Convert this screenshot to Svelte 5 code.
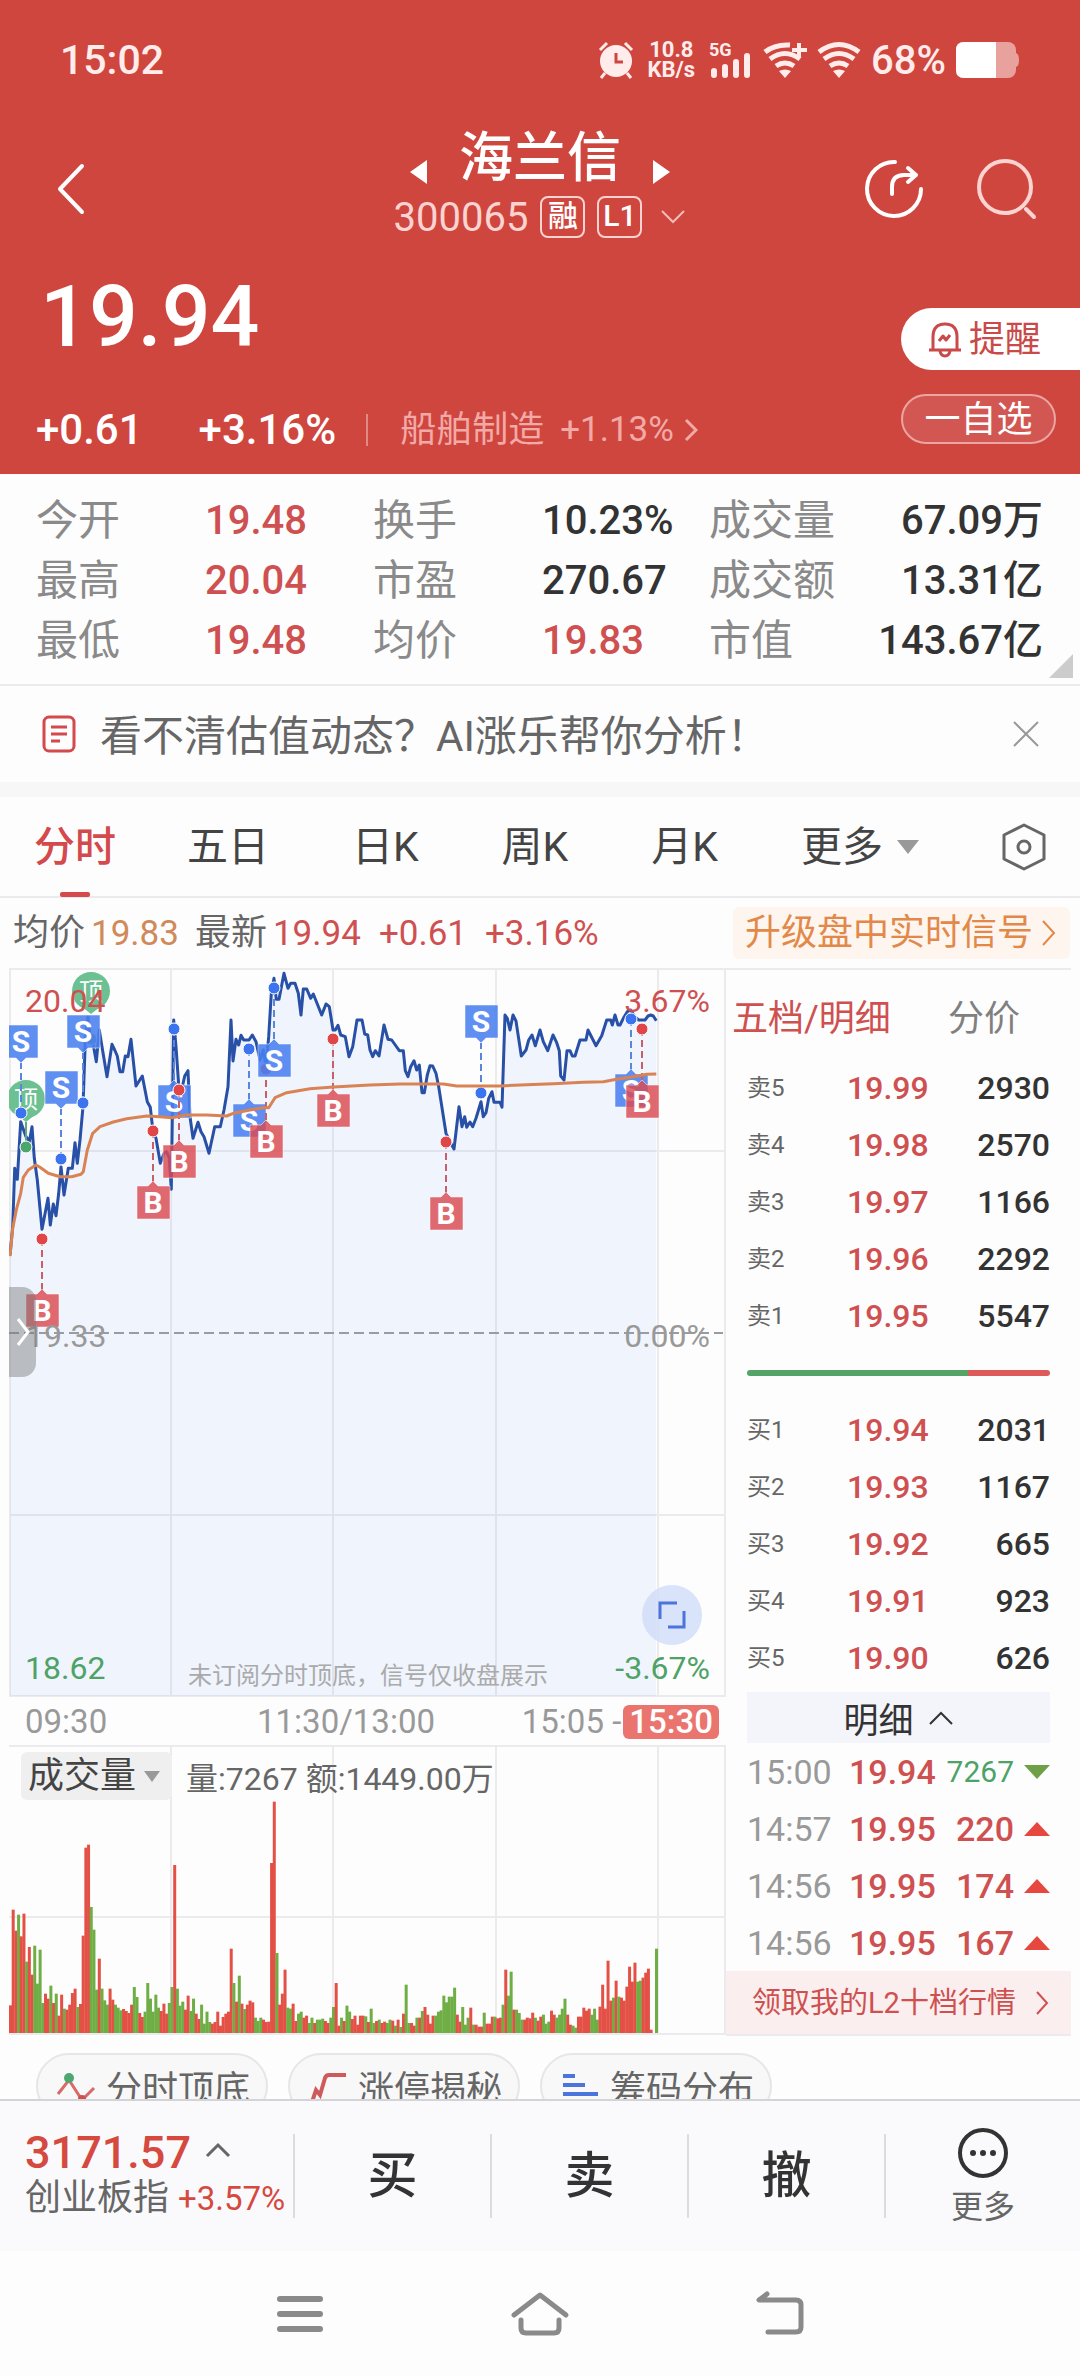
<script>
  const stats = [
    ['今开', '19.48', 'up'], ['换手', '10.23%', ''], ['成交量', '67.09万', ''],
    ['最高', '20.04', 'up'], ['市盈', '270.67', ''], ['成交额', '13.31亿', ''],
    ['最低', '19.48', 'up'], ['均价', '19.83', 'up'], ['市值', '143.67亿', ''],
  ];

  const periods = ['分时', '五日', '日K', '周K', '月K'];
  let period = $state('分时');

  const asks = [
    ['卖5', '19.99', 2930], ['卖4', '19.98', 2570], ['卖3', '19.97', 1166],
    ['卖2', '19.96', 2292], ['卖1', '19.95', 5547],
  ];
  const bids = [
    ['买1', '19.94', 2031], ['买2', '19.93', 1167], ['买3', '19.92', 665],
    ['买4', '19.91', 923], ['买5', '19.90', 626],
  ];
  const ticks = [
    ['15:00', '19.94', 7267, 'down'],
    ['14:57', '19.95', 220, 'up'],
    ['14:56', '19.95', 174, 'up'],
    ['14:56', '19.95', 167, 'up'],
  ];

  // chart samples are stored in thirds of a unit
  const price = [
    30,915, 38,830, 44,655, 52,688, 62,515, 78,560, 88,575, 96,530, 103,625, 112,690, 126,838, 144,745,
    151,825, 160,762, 168,797, 176,730, 183,650, 192,735, 205,655, 217,655, 225,578, 232,640, 240,570,
    249,470, 256,270, 264,200, 272,270, 280,285, 289,335, 298,240, 306,290, 321,380, 336,283, 344,300,
    352,318, 360,365, 368,365, 376,318, 384,320, 393,268, 408,408, 427,378, 442,455, 451,472, 459,543,
    468,565, 481,640, 492,610, 500,605, 508,625, 514,718, 521,210, 528,290, 537,418, 546,415, 554,378,
    564,362, 570,500, 579,565, 594,517, 603,545, 612,560, 627,610, 644,530, 661,530, 672,480, 684,410,
    693,210, 699,333, 708,268, 716,285, 723,256, 731,270, 747,270, 757,255, 768,275, 780,330, 790,300,
    798,350, 806,260, 814,130, 822,85, 829,148, 837,148, 852,70, 864,115, 872,100, 885,100, 895,130,
    903,195, 910,117, 920,117, 932,145, 940,132, 965,195, 978,162, 988,170, 999,240, 1006,240, 1014,226,
    1022,255, 1036,260, 1047,320, 1058,290, 1071,210, 1086,210, 1094,252, 1103,255, 1110,300, 1118,320,
    1126,302, 1137,318, 1152,225, 1164,268, 1175,270, 1188,288, 1198,302, 1210,302, 1216,362, 1224,380,
    1232,350, 1242,332, 1250,360, 1258,345, 1266,428, 1273,428, 1282,375, 1290,347, 1298,348, 1308,370,
    1316,410, 1338,550, 1350,575, 1362,597, 1377,470, 1386,530, 1394,500, 1400,532, 1410,516, 1418,530,
    1428,505, 1443,455, 1450,500, 1458,488, 1466,445, 1476,425, 1482,457, 1500,457, 1506,472, 1515,195,
    1522,205, 1530,240, 1539,195, 1548,213, 1564,318, 1578,300, 1586,270, 1596,255, 1606,287, 1620,240,
    1630,275, 1643,302, 1659,255, 1670,278, 1678,302, 1682,378, 1692,390, 1701,302, 1710,302, 1717,318,
    1725,318, 1740,270, 1758,270, 1764,240, 1788,287, 1805,257, 1820,210, 1832,210, 1837,225, 1845,195,
    1854,225, 1860,225, 1870,205, 1882,185, 1892,180, 1904,200, 1916,210, 1935,210, 1944,198, 1952,195,
    1960,198, 1969,212,
  ];
  const average = [
    30,918, 38,835, 50,775, 62,730, 70,682, 85,660, 108,645, 120,652, 145,670, 180,680, 215,680, 243,673,
    250,665, 262,600, 278,550, 300,530, 340,516, 380,506, 440,498, 480,500, 515,503, 560,495, 620,495,
    680,498, 700,490, 750,480, 790,473, 806,473, 825,443, 860,428, 930,416, 1000,411, 1110,405, 1200,402,
    1330,402, 1370,408, 1500,408, 1580,404, 1660,401, 1750,397, 1810,395, 1850,388, 1900,380, 1940,373,
    1969,372,
  ];
  // one bar a minute, negative = seller driven
  const volume = [
    83,370,307,-355,290,358,-214,258,175,-262,-148,-250,-90,118,103,-142,90,-118,52,115,-73,70,85,120,
    133,-78,87,292,556,565,-378,-310,-130,223,-133,-98,-85,133,100,-85,-76,-68,72,66,60,85,-138,-108,
    60,48,-64,-150,-103,-64,-115,-76,66,88,58,-90,-138,504,-133,-82,-94,70,112,-66,-103,58,42,-85,
    -28,-64,-33,28,33,64,22,48,58,64,253,-150,94,-172,88,-72,85,97,92,-46,-36,-46,40,33,34,510,694,
    -240,85,118,190,-76,-73,88,36,-58,-64,46,52,-30,-46,30,-40,-40,-43,36,30,-46,-78,150,22,-46,36,
    -82,-64,42,52,25,52,52,-50,33,-73,-30,36,-40,30,34,-30,-40,37,-22,40,-18,58,-145,-30,30,22,-46,
    46,-66,78,55,28,52,-52,-64,-68,-112,-92,-109,-109,-136,55,34,-78,-25,-46,76,-25,25,19,19,-61,28,
    28,49,-49,44,46,-85,190,-112,-184,70,-70,-60,-40,40,46,44,61,-46,37,49,-55,-28,-34,67,55,-46,-55,
    -73,-103,55,25,-22,-16,49,49,76,67,73,-55,-73,-40,79,145,73,217,97,-106,157,-109,106,97,139,199,
    154,211,-154,-157,166,181,193,10,0,-253,
  ];

  const toPoints = (list) => list.map((v) => (v / 3).toFixed(1)).join(' ');
  const priceLine = toPoints(price);
  const averageLine = toPoints(average);

  const markers = [
    { kind: 'S', x: 21, box: 75, dot: 163 },
    { kind: 'S', x: 61, box: 121, dot: 209 },
    { kind: 'S', x: 83, box: 65, dot: 153 },
    { kind: 'S', x: 174, box: 135, dot: 79 },
    { kind: 'S', x: 249, box: 154, dot: 99 },
    { kind: 'B', x: 42, box: 344, dot: 289 },
    { kind: 'B', x: 153, box: 236, dot: 181 },
    { kind: 'B', x: 179, box: 195, dot: 140 },
    { kind: 'B', x: 266, box: 175, dot: 119 },
    { kind: 'S', x: 274, box: 94, dot: 38 },
    { kind: 'B', x: 333, box: 144, dot: 89 },
    { kind: 'S', x: 481, box: 55, dot: 143 },
    { kind: 'B', x: 446, box: 247, dot: 192 },
    { kind: 'S', x: 631, box: 124, dot: 69 },
    { kind: 'B', x: 642, box: 135, dot: 79 },
  ];
</script>

<div class="page">
  <header>
    <div class="status">
      <span class="clock">15:02</span>
      <div class="status-right">
        <svg width="36" height="38" viewBox="0 0 36 38">
          <circle cx="18" cy="20" r="16" fill="#ffeceb" />
          <path d="M2 9 L9 2 M34 9 L27 2 M7 32 L3 37 M29 32 L33 37" stroke="#ffeceb" stroke-width="3" />
          <path d="M18 12 V21 H25" fill="none" stroke="#cf463f" stroke-width="3" />
        </svg>
        <span class="speed">10.8<br />KB/s</span>
        <svg width="44" height="42" viewBox="0 0 44 42">
          <text x="0" y="17" fill="#ffeceb" font-size="18" font-weight="700">5G</text>
          <path d="M5 32 V36 M16 28 V36 M27 23 V36 M38 17 V36" stroke="#ffeceb" stroke-width="6" stroke-linecap="round" />
        </svg>
        {#each [true, false] as plus}
          <svg width="44" height="38" viewBox="0 0 44 38">
            <g fill="none" stroke="#ffeceb" stroke-width="5">
              <path d={plus ? 'M2 11 Q12 3 27 4' : 'M2 11 Q22 -4 42 11'} />
              <path d="M7 18 Q22 7 37 18" />
              <path d="M13 25 Q22 19 31 25" />
              {#if plus}<path d="M36 2 V17 M29 9 H44" stroke-width="4" />{/if}
            </g>
            <path d="M16 30 Q22 27 28 30 L22 37 Z" fill="#ffeceb" />
          </svg>
        {/each}
        <span class="percent">68%</span>
        <svg width="64" height="36" viewBox="0 0 64 36">
          <rect width="60" height="36" rx="8" fill="#e9a19e" />
          <path d="M60 11 Q63 12 63 18 Q63 24 60 25 Z" fill="#e9a19e" />
          <path d="M8 0 H40 V36 H8 Q0 36 0 28 V8 Q0 0 8 0 Z" fill="#fff" />
        </svg>
      </div>
    </div>

    <nav class="title-bar">
      <button class="back" aria-label="返回">
        <svg width="30" height="52" viewBox="0 0 30 52"><path d="M26 3 L4 26 L26 49" fill="none" stroke="#fff" stroke-width="4" stroke-linecap="round" stroke-linejoin="round" /></svg>
      </button>
      <div class="stock">
        <div class="stock-name">
          <button aria-label="上一只"><svg width="20" height="28" viewBox="0 0 20 28"><path d="M18 2 V26 L1 14 Z" fill="#fff" /></svg></button>
          <h1>海兰信</h1>
          <button aria-label="下一只"><svg width="20" height="28" viewBox="0 0 20 28"><path d="M2 2 V26 L19 14 Z" fill="#fff" /></svg></button>
        </div>
        <div class="stock-code">
          <span>300065</span>
          <span class="tag">融</span>
          <span class="tag">L1</span>
          <svg width="26" height="16" viewBox="0 0 26 16"><path d="M2 2 L13 13 L24 2" fill="none" stroke="#f3bcb9" stroke-width="2" /></svg>
        </div>
      </div>
      <div class="actions">
        <button aria-label="刷新">
          <svg width="60" height="60" viewBox="0 0 60 60" fill="none" stroke="#fff" stroke-width="4" stroke-linecap="round" stroke-linejoin="round">
            <path d="M31 3 A27 27 0 1 0 57 30" />
            <path d="M28 35 V28 Q28 16 40 16 H52 M44 9 L52 16 L44 23" />
          </svg>
        </button>
        <button aria-label="搜索">
          <svg width="62" height="62" viewBox="0 0 62 62" fill="none" stroke="#fbd3d1" stroke-width="4" stroke-linecap="round"><circle cx="29" cy="29" r="26" /><path d="M50 51 L58 59" /></svg>
        </button>
      </div>
    </nav>

    <div class="quote">
      <div>
        <div class="last">19.94</div>
        <div class="change">
          <span>+0.61</span>
          <span class="rate">+3.16%</span>
          <a href="#sector">船舶制造<span>+1.13%</span>
            <svg width="14" height="26" viewBox="0 0 14 26"><path d="M2 3 L12 13 L2 23" fill="none" stroke="#f2aaa7" stroke-width="3" /></svg>
          </a>
        </div>
      </div>
      <div class="quote-actions">
        <button class="alert">
          <svg width="34" height="36" viewBox="0 0 34 36" fill="none" stroke="#c94a48" stroke-width="3" stroke-linejoin="round">
            <path d="M5 27 V15 Q5 2 17 2 Q29 2 29 15 V27 M1 28 H33 M12 29 Q13 34 17 34 Q21 34 22 29" />
            <path d="M11 19 L15 14 L18 18 L22 13" />
          </svg>
          提醒
        </button>
        <button class="watch">一自选</button>
      </div>
    </div>
  </header>

  <dl class="stats">
    {#each stats as [label, value, tone]}
      <div>
        <dt>{label}</dt>
        <dd class={tone}>{value}</dd>
      </div>
    {/each}
    <i class="corner"></i>
  </dl>

  <div class="notice">
    <svg width="34" height="38" viewBox="0 0 34 38" fill="none" stroke="#d4494b" stroke-width="3"><rect x="2" y="2" width="30" height="34" rx="5" /><path d="M9 12 H25 M9 19 H25 M9 26 H18" /></svg>
    <span>看不清估值动态？AI涨乐帮你分析！</span>
    <button aria-label="关闭"><svg width="28" height="28" viewBox="0 0 28 28"><path d="M2 2 L26 26 M26 2 L2 26" stroke="#999" stroke-width="2" /></svg></button>
  </div>

  <nav class="periods">
    {#each periods as name}
      <button class:active={period === name} onclick={() => (period = name)}>{name}</button>
    {/each}
    <button class="more">更多<i></i></button>
    <button aria-label="设置">
      <svg width="44" height="48" viewBox="0 0 44 48" fill="none" stroke="#666" stroke-width="3" stroke-linejoin="round"><path d="M22 2 L42 12 V36 L22 46 L2 36 V12 Z" /><circle cx="22" cy="24" r="6" /></svg>
    </button>
  </nav>

  <div class="summary">
    <p>
      均价<span class="avg">19.83</span>最新<span class="up">19.94</span><span class="up">+0.61</span><span class="up">+3.16%</span>
    </p>
    <a href="#signal">升级盘中实时信号
      <svg width="15" height="28" viewBox="0 0 15 28"><path d="M2 2 L13 14 L2 26" fill="none" stroke="#e2894a" stroke-width="2" /></svg>
    </a>
  </div>

  <main>
    <section class="charts">
      <div class="price-chart">
        <svg viewBox="9 18 717 730">
          <g stroke="#ebebed" stroke-width="2">
            <path d="M10 18 V746 M171 18 V746 M333 18 V746 M496 18 V746 M658 18 V746 M725 18 V746" />
            <path d="M9 19 H726 M9 201 H726 M9 565 H726 M9 746 H726" />
          </g>
          <polygon points="{priceLine} 656 746 10 746" fill="#3f86ff" fill-opacity="0.07" />
          <path d="M9 383 H723" stroke="#9b9ca3" stroke-width="2" stroke-dasharray="10 5" />
          <polyline points={priceLine} fill="none" stroke="#2850a6" stroke-width="3" stroke-linejoin="round" />

          <g class="pin">
            <path d="M77 53 L91 64 L105 53 Z" />
            <circle cx="91" cy="41" r="19" />
            <text x="91" y="50">顶</text>
            <circle cx="91" cy="89" r="6" class="dot" />
            <path d="M12 161 L26 172 L40 161 Z" />
            <circle cx="26" cy="149" r="19" />
            <text x="26" y="158">顶</text>
            <path d="M26 172 V191" stroke="#62a87c" stroke-width="2" />
            <circle cx="26" cy="197" r="6" class="dot" />
          </g>

          {#each markers as m}
            {@const above = m.box < m.dot}
            <g class={m.kind}>
              <path class="lead" d="M{m.x} {m.dot} V{above ? m.box + 38 : m.box - 4}" />
              <path class="box" d={above
                ? `M${m.x - 16} ${m.box} h33 v33 h-12 l-5 5 l-5 -5 h-11 z`
                : `M${m.x - 16} ${m.box} h11 l5 -5 l5 5 h12 v33 h-33 z`} />
              <text x={m.x} y={m.box + 27}>{m.kind}</text>
              <circle class="dot" cx={m.x} cy={m.dot} r="6" />
            </g>
          {/each}

          <polyline points={averageLine} fill="none" stroke="#d98355" stroke-width="3" stroke-linejoin="round" />

          <g class="labels">
            <text x="25" y="62" fill="#cf5050">20.04</text>
            <text x="710" y="62" fill="#cf5050" text-anchor="end">3.67%</text>
            <text x="26" y="397" fill="#999">19.33</text>
            <text x="710" y="397" fill="#999" text-anchor="end">0.00%</text>
            <text x="25" y="729" fill="#4ea266">18.62</text>
            <text x="710" y="729" fill="#4ea266" text-anchor="end">-3.67%</text>
            <text class="hint" x="188" y="734">未订阅分时顶底，信号仅收盘展示</text>
          </g>
        </svg>
        <button class="drawer" aria-label="展开"><svg width="14" height="32" viewBox="0 0 14 32"><path d="M2 3 L12 16 L2 29" fill="none" stroke="#fff" stroke-width="3" /></svg></button>
        <button class="expand" aria-label="全屏"><svg width="28" height="28" viewBox="0 0 28 28" fill="none" stroke="#4b74dc" stroke-width="3"><path d="M19 2 H2 V18 M26 10 V26 H10" /></svg></button>
      </div>

      <div class="axis">
        <span>09:30</span>
        <span>11:30/13:00</span>
        <span>15:05 -<b>15:30</b></span>
      </div>

      <div class="volume-chart">
        <svg viewBox="9 4 717 292">
          <path d="M9 6 H726 M9 177 H726 M9 294 H726 M171 6 V294 M333 6 V294 M496 6 V294 M658 6 V294 M725 6 V294" stroke="#ebebed" stroke-width="2" />
          {#each volume as v, i}
            <rect x={9 + (i * 646) / 240} y={293 - Math.abs(v) / 3} width="3" height={Math.abs(v) / 3} fill={v > 0 ? '#e35045' : '#6fae45'} />
          {/each}
        </svg>
        <div class="volume-head">
          <button>成交量<i></i></button>
          <span>量:7267 额:1449.00万</span>
        </div>
      </div>
    </section>

    <aside>
      <div class="book-tabs">
        <button class="active">五档/明细</button>
        <button>分价</button>
      </div>
      {#snippet book(rows)}
        <table class="book">
          <tbody>
            {#each rows as [label, rowPrice, size]}
              <tr><th scope="row">{label}</th><td class="up">{rowPrice}</td><td class="size">{size}</td></tr>
            {/each}
          </tbody>
        </table>
      {/snippet}
      {@render book(asks)}
      <div class="ratio"><i></i></div>
      {@render book(bids)}
      <button class="detail">明细
        <svg width="26" height="16" viewBox="0 0 26 16"><path d="M2 14 L13 3 L24 14" fill="none" stroke="#333" stroke-width="2" /></svg>
      </button>
      <table class="ticks">
        <tbody>
          {#each ticks as [time, tickPrice, size, side]}
            <tr>
              <th scope="row">{time}</th>
              <td class="up">{tickPrice}</td>
              <td class="qty {side}" class:long={size > 999}>{size}</td>
              <td><i class={side}></i></td>
            </tr>
          {/each}
        </tbody>
      </table>
      <a class="level2" href="#level2">领取我的L2十档行情
        <svg width="14" height="26" viewBox="0 0 14 26"><path d="M2 2 L12 13 L2 24" fill="none" stroke="#cf5050" stroke-width="2" /></svg>
      </a>
    </aside>
  </main>

  <div class="chips">
    <button>
      <svg width="40" height="34" viewBox="0 0 40 34" fill="none"><path d="M2 25 L13 11 L26 31 L38 19" stroke="#d96a6a" stroke-width="3" /><circle cx="13" cy="9" r="5" fill="#4ca870" /><circle cx="26" cy="30" r="4" fill="#cf5050" /></svg>
      分时顶底
    </button>
    <button>
      <svg width="40" height="34" viewBox="0 0 40 34" fill="none"><path d="M4 33 L8 21 L12 26 L17 9 Q18 6 21 6 H38" stroke="#cf5a5c" stroke-width="4" /></svg>
      涨停揭秘
    </button>
    <button>
      <svg width="40" height="34" viewBox="0 0 40 34"><path d="M3 7 H15 M3 16 H25 M3 25 H38" stroke="#4b74dc" stroke-width="4" /></svg>
      筹码分布
    </button>
  </div>

  <footer>
    <button class="index">
      <span class="index-value">3171.57
        <svg width="26" height="16" viewBox="0 0 26 16"><path d="M2 14 L13 3 L24 14" fill="none" stroke="#666" stroke-width="3" /></svg>
      </span>
      <span class="index-name">创业板指 <em>+3.57%</em></span>
    </button>
    <button class="trade">买</button>
    <button class="trade">卖</button>
    <button class="trade">撤</button>
    <button class="menu">
      <svg width="52" height="52" viewBox="0 0 52 52"><circle cx="26" cy="26" r="23" fill="none" stroke="#333" stroke-width="4" /><g fill="#333"><circle cx="16" cy="26" r="3" /><circle cx="26" cy="26" r="3" /><circle cx="36" cy="26" r="3" /></g></svg>
      更多
    </button>
  </footer>

  <div class="system">
    <button aria-label="最近任务"><svg width="48" height="48" viewBox="0 0 48 48"><path d="M4 9 H44 M4 24 H44 M4 39 H44" stroke="#8a8a8a" stroke-width="6" stroke-linecap="round" /></svg></button>
    <button aria-label="主页"><svg width="60" height="48" viewBox="0 0 60 48" fill="none" stroke="#8a8a8a" stroke-width="5" stroke-linecap="round" stroke-linejoin="round"><path d="M4 25 L30 5 L56 25" /><path d="M11 30 V38 Q11 43 16 43 H44 Q49 43 49 38 V30" /></svg></button>
    <button aria-label="后退"><svg width="48" height="48" viewBox="0 0 48 48" fill="none" stroke="#8a8a8a" stroke-width="5" stroke-linecap="round" stroke-linejoin="round"><path d="M11 4 L3 10 H40 Q45 10 45 15 V37 Q45 42 40 42 H12" /></svg></button>
  </div>
</div>

<style>
  :global(body) {
    margin: 0;
    background: #fdfdfd;
  }

  .page {
    display: flex;
    flex-direction: column;
    min-height: 100vh;
    font-family: Roboto, "Noto Sans CJK SC", sans-serif;
    font-weight: 400;
    color: #333;
    background: #fdfdfd;
    overflow: hidden;
  }

  button {
    margin: 0;
    padding: 0;
    border: 0;
    background: none;
    font: inherit;
    color: inherit;
    cursor: pointer;
  }

  a {
    color: inherit;
    text-decoration: none;
  }

  svg {
    display: block;
    flex: none;
  }

  .up {
    color: #cf5050;
  }

  header {
    color: #fff;
    background: #cf463f;
  }

  .status {
    display: flex;
    align-items: center;
    justify-content: space-between;
    height: 120px;
    padding: 0 60px;
  }

  .clock {
    font-size: 41px;
    font-weight: 500;
    color: #ffeceb;
  }

  .status-right {
    display: flex;
    align-items: center;
    gap: 10px;
    color: #ffeceb;
  }

  .speed {
    margin: 0 4px;
    font-size: 22px;
    line-height: 20px;
    font-weight: 700;
    text-align: center;
  }

  .percent {
    font-size: 40px;
    font-weight: 500;
  }

  .title-bar {
    display: grid;
    grid-template-columns: 1fr auto 1fr;
    align-items: center;
    height: 138px;
    padding: 0 42px;
  }

  .back {
    justify-self: start;
    margin-left: 14px;
  }

  .stock {
    padding-top: 4px;
  }

  .stock-name,
  .stock-code {
    display: flex;
    align-items: center;
    justify-content: center;
  }

  .stock-name {
    gap: 30px;
    height: 64px;
  }

  .stock-name button {
    padding-top: 26px;
  }

  h1 {
    margin: 0;
    font-size: 54px;
    line-height: 64px;
    font-weight: 500;
  }

  .stock-code {
    gap: 12px;
    height: 52px;
    padding-bottom: 12px;
    font-size: 40px;
    color: #fbd3d1;
  }

  .tag {
    box-sizing: border-box;
    width: 45px;
    height: 42px;
    border: 2px solid #fbd3d1;
    border-radius: 8px;
    font-size: 30px;
    line-height: 36px;
    font-weight: 500;
    text-align: center;
    color: #fff;
  }

  .stock-code svg {
    margin-left: 6px;
  }

  .actions {
    display: flex;
    justify-content: flex-end;
    gap: 52px;
  }

  .quote {
    display: flex;
    justify-content: space-between;
    height: 216px;
  }

  .last {
    padding-left: 40px;
    font-size: 86px;
    line-height: 118px;
    font-weight: 500;
  }

  .change {
    display: flex;
    align-items: center;
    height: 108px;
    padding-left: 36px;
    font-size: 42px;
    line-height: 60px;
    font-weight: 500;
  }

  .rate {
    margin: 0 30px 0 56px;
  }

  .change a {
    display: flex;
    align-items: center;
    padding-left: 32px;
    border-left: 2px solid #e08a86;
    font-size: 36px;
    line-height: 32px;
    font-weight: 400;
    color: #f2aaa7;
  }

  .change a span {
    margin: 0 10px 0 16px;
    font-size: 35px;
  }

  .quote-actions {
    display: flex;
    flex-direction: column;
    gap: 24px;
    width: 179px;
    padding-top: 50px;
  }

  .alert {
    display: flex;
    align-items: center;
    gap: 7px;
    height: 62px;
    padding: 2px 0 0 27px;
    box-sizing: border-box;
    border-radius: 31px 0 0 31px;
    font-size: 36px;
    line-height: 52px;
    color: #c94a48;
    background: #fff;
  }

  .watch {
    box-sizing: border-box;
    width: 155px;
    height: 50px;
    border: 2px solid #eba5a2;
    border-radius: 25px;
    font-size: 36px;
    line-height: 48px;
    background: #d25752;
  }

  .stats {
    position: relative;
    display: grid;
    grid-template-columns: 337px 336px 1fr;
    margin: 0;
    padding: 17px 37px 13px 36px;
    border-bottom: 2px solid #ebebed;
    font-size: 42px;
    line-height: 60px;
  }

  .stats div {
    display: grid;
    grid-template-columns: 169px 1fr;
    white-space: nowrap;
  }

  .stats div:nth-child(3n) {
    grid-template-columns: auto 1fr;
    text-align: right;
  }

  dt {
    color: #8a8a8a;
  }

  dd {
    margin: 0;
    font-weight: 500;
    font-size: 40px;
  }

  .corner {
    position: absolute;
    right: 7px;
    bottom: 6px;
    border-left: 24px solid transparent;
    border-bottom: 24px solid #ccc;
  }

  .notice {
    display: flex;
    align-items: center;
    gap: 24px;
    height: 96px;
    padding: 0 40px 0 42px;
    border-bottom: 15px solid #f7f7f7;
    font-size: 42px;
    color: #666;
  }

  .notice span {
    padding-bottom: 4px;
  }

  .notice button {
    margin-left: auto;
  }

  .periods {
    display: flex;
    align-items: center;
    justify-content: space-between;
    height: 99px;
    padding: 0 34px;
    border-bottom: 2px solid #ebebed;
    font-size: 41px;
    color: #444;
  }

  .periods button {
    position: relative;
    line-height: 100px;
  }

  .periods button:first-child {
    margin-right: -12px;
  }

  .periods .active {
    font-weight: 500;
    color: #d4494b;
  }

  .periods .active::after {
    content: "";
    position: absolute;
    left: 26px;
    bottom: 0;
    width: 30px;
    height: 5px;
    border-radius: 2px;
    background: #d4494b;
  }

  .periods .more {
    display: flex;
    align-items: center;
    gap: 14px;
  }

  .more i,
  .volume-head i {
    border: solid transparent;
    border-width: 14px 11px 0;
    border-top-color: #999;
  }

  .summary {
    display: flex;
    align-items: center;
    justify-content: space-between;
    height: 70px;
    padding: 0 10px 0 13px;
    font-size: 36px;
    color: #666;
    white-space: nowrap;
  }

  .summary p {
    margin: 0;
    padding-bottom: 8px;
  }

  .summary span {
    margin: 0 12px 0 6px;
    font-size: 35px;
  }

  .summary .avg {
    margin-right: 16px;
    color: #d08a5a;
  }

  .summary a {
    display: flex;
    align-items: center;
    gap: 8px;
    padding: 0 14px 0 12px;
    border-radius: 6px;
    line-height: 52px;
    color: #e2894a;
    background: #fef5ee;
  }

  main {
    display: grid;
    grid-template-columns: minmax(0, 1fr) 354px;
  }

  .charts {
    padding-left: 9px;
  }

  .charts svg {
    width: 100%;
  }

  .price-chart,
  .volume-chart {
    position: relative;
  }

  .labels text {
    font-size: 32px;
  }

  .labels .hint {
    font-size: 24px;
    fill: #aaa;
  }

  .S,
  .B {
    font-size: 30px;
    font-weight: 700;
    text-anchor: middle;
  }

  .S text,
  .B text {
    fill: #fff;
  }

  .S .box {
    fill: #4a80f0;
    fill-opacity: 0.88;
  }

  .B .box {
    fill: #db4a50;
    fill-opacity: 0.82;
  }

  .box {
    stroke: #fff;
    stroke-opacity: 0.5;
  }

  .lead {
    stroke-width: 2;
    stroke-dasharray: 7 4;
  }

  .S .lead {
    stroke: #5b84dc;
  }

  .B .lead {
    stroke: #c85f68;
  }

  .dot {
    stroke: #fff;
  }

  .S .dot {
    fill: #3b74ee;
  }

  .B .dot {
    fill: #e04648;
  }

  .pin {
    fill: #6cc091;
    font-size: 24px;
    text-anchor: middle;
  }

  .pin text {
    fill: #fff;
  }

  .pin .dot {
    fill: #4ca66a;
  }

  .drawer {
    position: absolute;
    left: 0;
    top: 319px;
    display: flex;
    align-items: center;
    justify-content: center;
    width: 27px;
    height: 90px;
    border-radius: 0 14px 14px 0;
    background: rgb(120 120 120 / 45%);
  }

  .drawer svg,
  .expand svg {
    width: auto;
  }

  .expand {
    position: absolute;
    right: 24px;
    bottom: 53px;
    display: flex;
    align-items: center;
    justify-content: center;
    width: 60px;
    height: 60px;
    border-radius: 50%;
    background: rgb(208 220 248 / 80%);
  }

  .axis {
    display: grid;
    grid-template-columns: 232px 1fr auto;
    align-items: center;
    height: 46px;
    padding: 0 7px 0 16px;
    font-size: 33px;
    color: #999;
  }

  .axis b {
    display: inline-block;
    margin-left: 2px;
    padding: 0 6px;
    border-radius: 6px;
    line-height: 34px;
    font-weight: 500;
    color: #fff;
    background: #ea746e;
  }

  .volume-head {
    position: absolute;
    top: 8px;
    left: 12px;
    display: flex;
    align-items: center;
    gap: 14px;
    font-size: 32px;
    color: #666;
  }

  .volume-head button {
    display: flex;
    align-items: center;
    gap: 8px;
    padding: 0 12px 0 7px;
    border-radius: 6px;
    font-size: 36px;
    line-height: 48px;
    color: #444;
    background: #efefef;
  }

  .volume-head i {
    border-width: 11px 8px 0;
  }

  aside {
    display: flex;
    flex-direction: column;
    margin-right: 9px;
    border-top: 2px solid #ebebed;
    border-bottom: 2px solid #ebebed;
  }

  .book-tabs {
    display: flex;
    align-items: center;
    justify-content: space-between;
    height: 89px;
    padding: 0 51px 0 6px;
    font-size: 36px;
    color: #808080;
  }

  .book-tabs .active {
    color: #cf5050;
  }

  table {
    margin: 0 21px;
    border-collapse: collapse;
  }

  tr {
    height: 57px;
  }

  th,
  td {
    padding: 0;
    font-weight: 500;
  }

  th {
    text-align: left;
    font-weight: 400;
  }

  .book {
    font-size: 32px;
    line-height: 40px;
  }

  .book th {
    width: 100px;
    font-size: 24px;
    color: #666;
  }

  .size {
    text-align: right;
  }

  .ratio {
    display: flex;
    align-items: center;
    height: 57px;
    margin: 0 21px;
  }

  .ratio i {
    flex: 1;
    height: 6px;
    border-radius: 3px;
    background: linear-gradient(90deg, #54a468 73%, #dc5a5a 73%);
  }

  .detail {
    display: flex;
    align-items: center;
    justify-content: center;
    gap: 14px;
    height: 51px;
    margin: 6px 21px 0;
    font-size: 35px;
    background: #f3f5fa;
  }

  .ticks {
    font-size: 34px;
    line-height: 42px;
  }

  .ticks th {
    width: 102px;
    color: #999;
  }

  .qty {
    width: 78px;
    text-align: right;
    color: #cf5050;
  }

  .qty.long {
    font-size: 30px;
    font-weight: 400;
  }

  .qty.down {
    color: #4ea266;
  }

  .ticks td:last-child {
    width: 36px;
  }

  .ticks i {
    display: block;
    width: 0;
    margin-left: auto;
    border: solid transparent;
  }

  .ticks i.up {
    border-width: 0 13px 14px;
    border-bottom-color: #e6473f;
  }

  .ticks i.down {
    border-width: 14px 13px 0;
    border-top-color: #6fa048;
  }

  .level2 {
    display: flex;
    flex: 1;
    align-items: center;
    justify-content: space-between;
    padding: 0 22px 0 26px;
    font-size: 29px;
    line-height: 32px;
    color: #cf5050;
    background: #fbeeee;
  }

  .chips {
    display: flex;
    gap: 20px;
    height: 63px;
    padding: 0 36px;
    overflow: hidden;
  }

  .chips button {
    box-sizing: border-box;
    display: flex;
    align-items: center;
    gap: 10px;
    height: 66px;
    margin-top: 17px;
    padding: 0 16px 0 18px;
    border: 2px solid #e6e6e6;
    border-radius: 33px;
    font-size: 36px;
    color: #666;
    background: #f8f8f8;
  }

  footer {
    display: grid;
    grid-template-columns: 293px 197px 197px 197px 1fr;
    align-items: center;
    height: 150px;
    border-top: 2px solid #d4d4d8;
    background: #fafafc;
  }

  .index {
    padding: 0 0 6px 25px;
    text-align: left;
    white-space: nowrap;
  }

  .index-value {
    display: flex;
    align-items: center;
    gap: 14px;
    font-size: 45px;
    line-height: 50px;
    font-weight: 500;
    color: #d5493f;
  }

  .index-value svg {
    margin-bottom: 6px;
  }

  .index-name {
    display: block;
    font-size: 36px;
    line-height: 40px;
    color: #666;
  }

  .index-name em {
    font-size: 33px;
    font-style: normal;
    color: #d5493f;
  }

  .trade {
    height: 84px;
    border-left: 2px solid #dcdce0;
    font-size: 50px;
    line-height: 80px;
    font-weight: 500;
  }

  .trade + .menu {
    border-left: 2px solid #dcdce0;
  }

  .menu {
    display: flex;
    flex-direction: column;
    align-items: center;
    justify-content: center;
    gap: 8px;
    height: 84px;
    padding-top: 2px;
    font-size: 32px;
    line-height: 40px;
    color: #666;
  }

  .system {
    display: flex;
    align-items: center;
    justify-content: center;
    gap: 186px;
    height: 126px;
  }
</style>
